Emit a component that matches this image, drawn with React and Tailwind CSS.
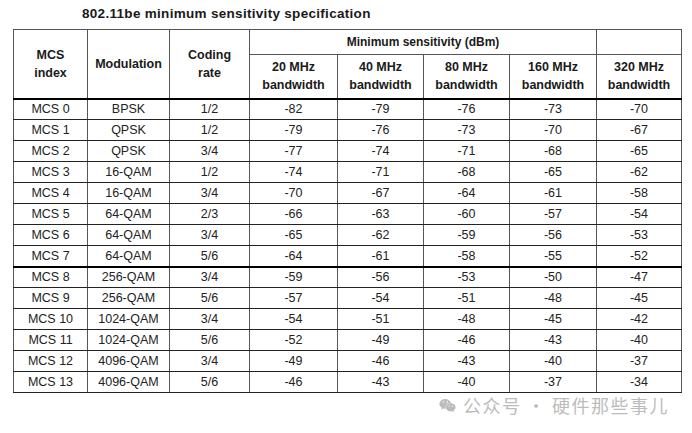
import React from 'react';
import { FaWeixin } from 'react-icons/fa';

const rows = [
  ['MCS 0', 'BPSK', '1/2', -82, -79, -76, -73, -70],
  ['MCS 1', 'QPSK', '1/2', -79, -76, -73, -70, -67],
  ['MCS 2', 'QPSK', '3/4', -77, -74, -71, -68, -65],
  ['MCS 3', '16-QAM', '1/2', -74, -71, -68, -65, -62],
  ['MCS 4', '16-QAM', '3/4', -70, -67, -64, -61, -58],
  ['MCS 5', '64-QAM', '2/3', -66, -63, -60, -57, -54],
  ['MCS 6', '64-QAM', '3/4', -65, -62, -59, -56, -53],
  ['MCS 7', '64-QAM', '5/6', -64, -61, -58, -55, -52],
  ['MCS 8', '256-QAM', '3/4', -59, -56, -53, -50, -47],
  ['MCS 9', '256-QAM', '5/6', -57, -54, -51, -48, -45],
  ['MCS 10', '1024-QAM', '3/4', -54, -51, -48, -45, -42],
  ['MCS 11', '1024-QAM', '5/6', -52, -49, -46, -43, -40],
  ['MCS 12', '4096-QAM', '3/4', -49, -46, -43, -40, -37],
  ['MCS 13', '4096-QAM', '5/6', -46, -43, -40, -37, -34],
];

const widths = ['w-[74px]', 'w-[82px]', 'w-[80px]', 'w-[88px]', 'w-[86px]', 'w-[86px]', 'w-[87px]', 'w-[85px]'];
const bands = ['20 MHz', '40 MHz', '80 MHz', '160 MHz', '320 MHz'];

export default function App() {
  const th = 'border border-[#555] font-bold text-[12.5px] leading-[18px] text-[#1a1a1a] text-center align-middle p-0';
  const td = 'border-x border-x-[#555] border-y border-y-[#222] text-[12.5px] leading-[14px] text-[#222] text-center align-middle p-0 h-[21px]';

  return (
    <div className="w-[692px] h-[433px] bg-white relative overflow-hidden" style={{ fontFamily: '"Liberation Sans", Arial, sans-serif' }}>
      <div className="pl-[82px] pt-[5px] h-[29px] text-[13.5px] font-bold tracking-[0.3px] text-[#1a1a1a] leading-[18px]">
        802.11be minimum sensitivity specification
      </div>
      <div className="pl-[13px]">
        <table className="border-collapse table-fixed w-[668px] border border-[#555]">
          <colgroup>
            {widths.map((w, i) => <col key={i} className={w} />)}
          </colgroup>
          <thead>
            <tr className="h-[25px]">
              <th rowSpan={2} className={`${th} border-b-2 border-b-black`}>MCS<br />index</th>
              <th rowSpan={2} className={`${th} border-b-2 border-b-black`}>Modulation</th>
              <th rowSpan={2} className={`${th} border-b-2 border-b-black`}>Coding<br />rate</th>
              <th colSpan={4} className={`${th} text-[12px]`}>Minimum sensitivity (dBm)</th>
              <th className={th}></th>
            </tr>
            <tr className="h-[44px]">
              {bands.map((b) => (
                <th key={b} className={`${th} border-b-2 border-b-black`}>{b}<br />bandwidth</th>
              ))}
            </tr>
          </thead>
          <tbody>
            {rows.map((r, i) => (
              <tr key={r[0]}>
                {r.map((c, j) => (
                  <td key={j} className={`${td} ${i === 7 ? 'border-b-2 border-b-black' : ''}`}>{c}</td>
                ))}
              </tr>
            ))}
          </tbody>
        </table>
      </div>
      <div className="absolute left-[439px] top-[395px] flex items-center gap-[7px] text-[#bcbcbc]">
        <FaWeixin className="w-[17px] h-[17px]" />
        <span className="text-[18px] leading-[20px] tracking-[1.5px]" style={{ fontFamily: '"Noto Sans CJK SC", sans-serif' }}>公众号 · 硬件那些事儿</span>
      </div>
    </div>
  );
}
